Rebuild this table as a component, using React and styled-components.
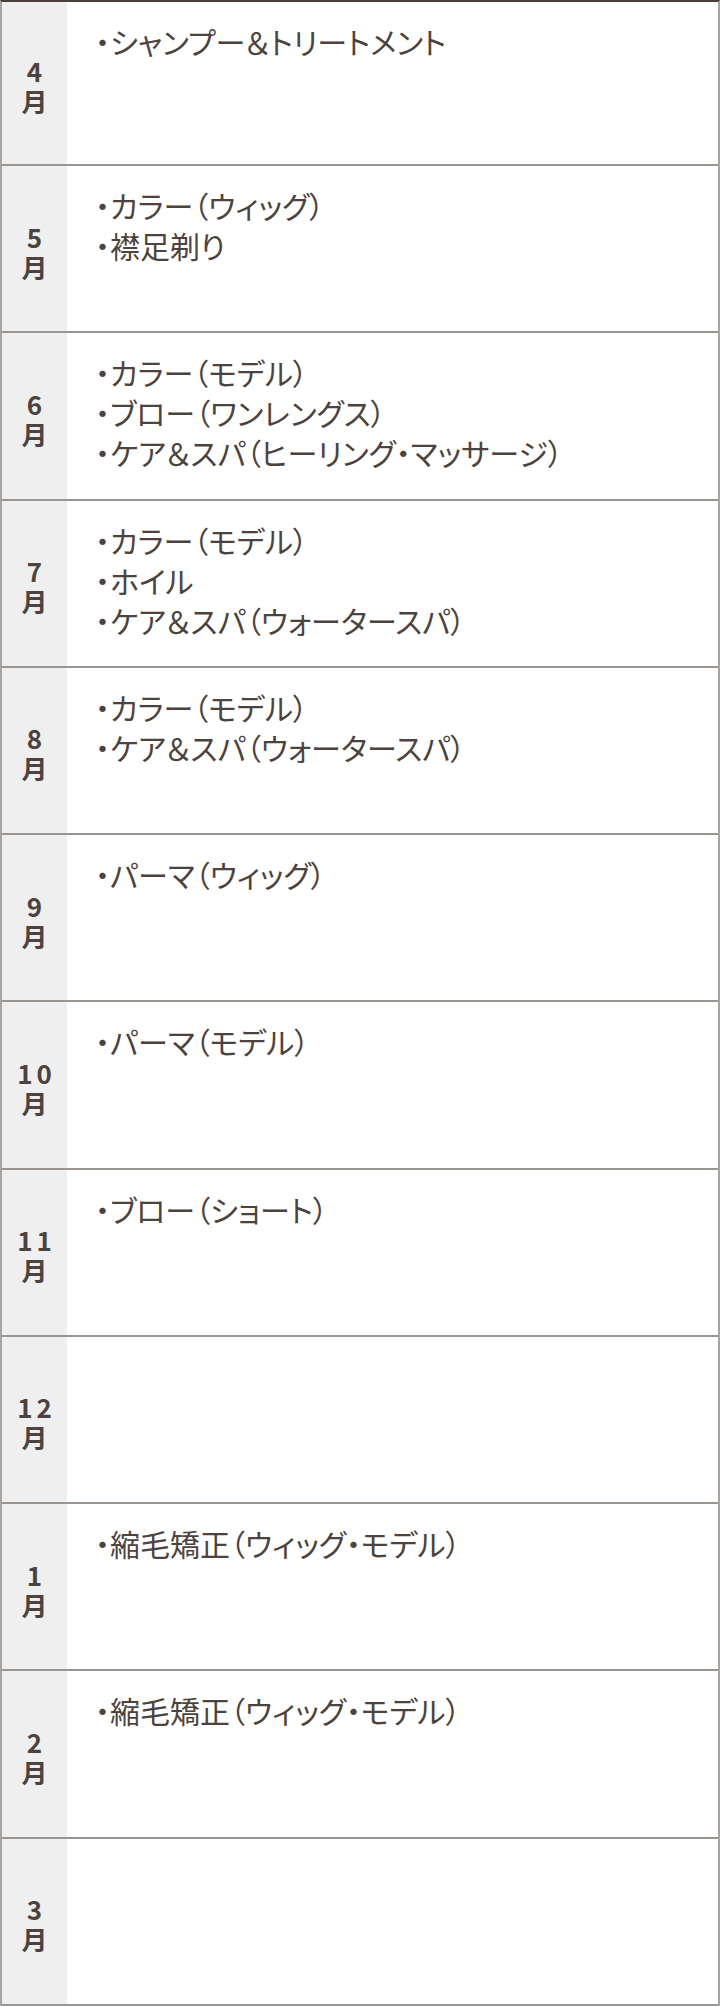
import styled, { createGlobalStyle } from "styled-components";

const GlobalStyle = createGlobalStyle`
  body {
    margin: 0;
    background: #ffffff;
  }
`;

const schedule = [
  { month: "4", items: ["・シャンプー＆トリートメント"] },
  { month: "5", items: ["・カラー（ウィッグ）", "・襟足剃り"] },
  {
    month: "6",
    items: ["・カラー（モデル）", "・ブロー（ワンレングス）", "・ケア＆スパ（ヒーリング・マッサージ）"],
  },
  { month: "7", items: ["・カラー（モデル）", "・ホイル", "・ケア＆スパ（ウォータースパ）"] },
  { month: "8", items: ["・カラー（モデル）", "・ケア＆スパ（ウォータースパ）"] },
  { month: "9", items: ["・パーマ（ウィッグ）"] },
  { month: "10", items: ["・パーマ（モデル）"] },
  { month: "11", items: ["・ブロー（ショート）"] },
  { month: "12", items: [] },
  { month: "1", items: ["・縮毛矯正（ウィッグ・モデル）"] },
  { month: "2", items: ["・縮毛矯正（ウィッグ・モデル）"] },
  { month: "3", items: [] },
];

const Table = styled.div`
  width: 720px;
  box-sizing: border-box;
  border-top: 2px solid #4b4039;
  border-left: 2px solid #a9a39f;
  border-right: 2px solid #a9a39f;
  font-family: "Noto Sans CJK JP", "Noto Sans", sans-serif;
  color: #4d433e;
`;

const Row = styled.div`
  display: grid;
  grid-template-columns: 65px 1fr;
  box-sizing: border-box;
  height: 167.27px;
  border-bottom: 2px solid #9b9592;

  &:first-child {
    height: 164px;
  }
`;

const MonthCell = styled.div`
  display: flex;
  flex-direction: column;
  align-items: center;
  justify-content: center;
  padding-top: 6px;
  background: #efefef;
  font-size: 26px;
  font-weight: 700;
  line-height: 30px;
`;

const MonthNum = styled.span`
  letter-spacing: 4px;
  margin-right: -4px;
`;

const ItemCell = styled.ul`
  margin: 0;
  padding: 19px 0 0 28px;
  list-style: none;
  font-size: 30px;
  font-weight: 400;
  line-height: 40px;
  font-feature-settings: "palt";
`;

const Item = styled.li`
  white-space: nowrap;
`;

export default function App() {
  return (
    <>
      <GlobalStyle />
      <Table>
        {schedule.map((row) => (
          <Row key={row.month}>
            <MonthCell>
              <MonthNum>{row.month}</MonthNum>
              <span>月</span>
            </MonthCell>
            <ItemCell>
              {row.items.map((item, idx) => (
                <Item key={idx}>{item}</Item>
              ))}
            </ItemCell>
          </Row>
        ))}
      </Table>
    </>
  );
}
